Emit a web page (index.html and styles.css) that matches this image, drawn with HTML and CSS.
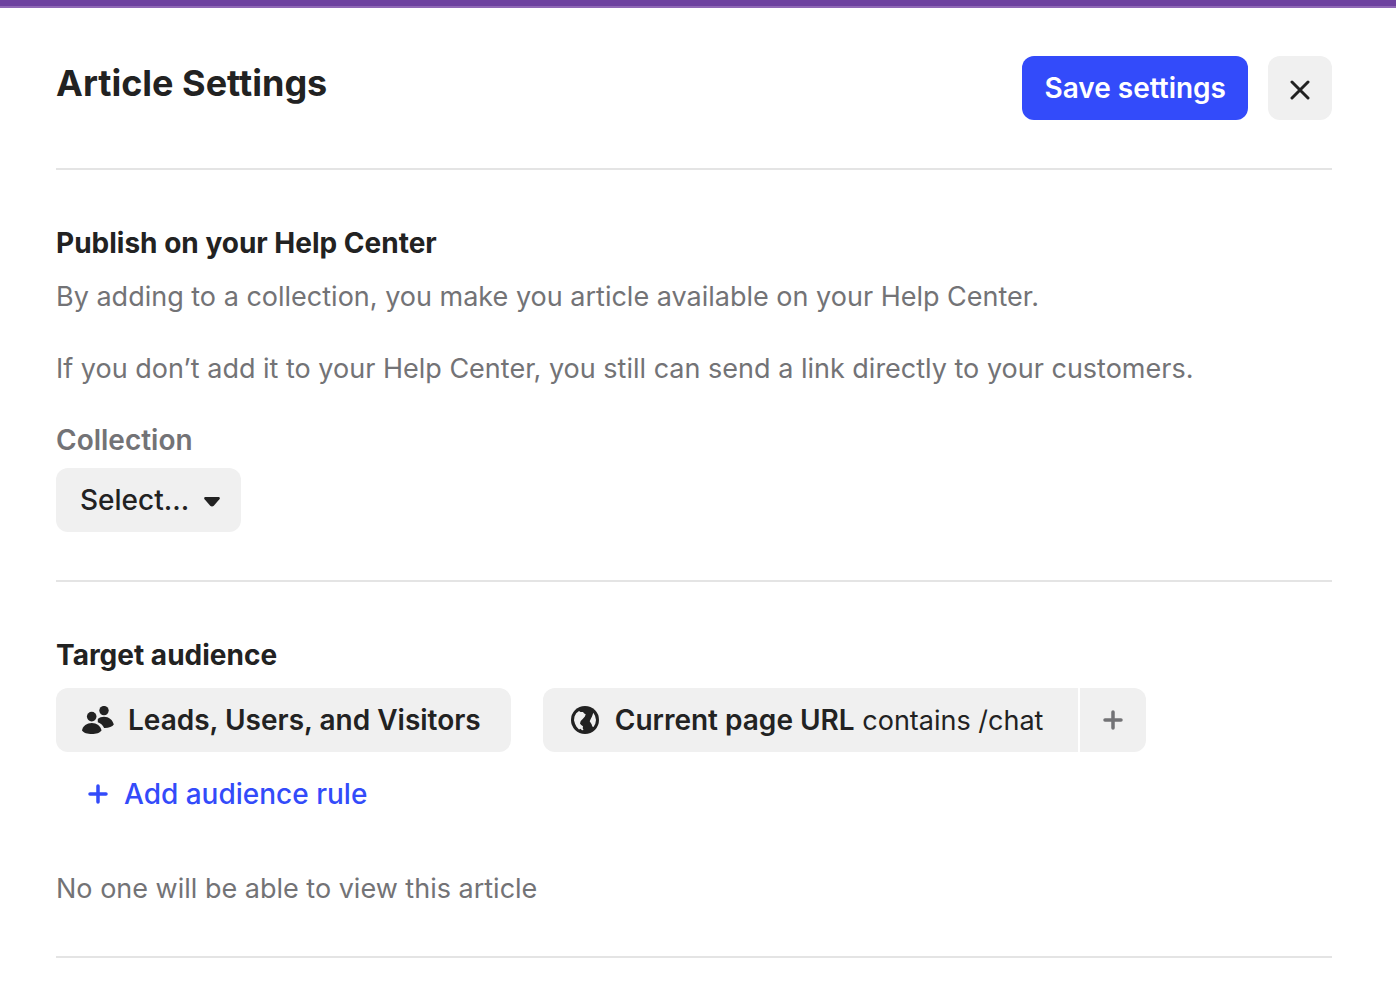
FILE: index.html
```html
<!DOCTYPE html>
<html lang="en">
<head>
  <meta charset="utf-8">
  <meta name="viewport" content="width=device-width, initial-scale=1">
  <title>Article Settings</title>
  <link rel="stylesheet" href="styles.css">
</head>
<body>
  <div class="topbar"></div>
  <main class="panel">
    <header class="panel-header">
      <h1 class="title">Article Settings</h1>
      <div class="actions">
        <button class="button button-primary" type="button">Save settings</button>
        <button class="button button-icon" type="button" aria-label="Close">
          <svg width="20" height="20" viewBox="0 0 20 20" fill="none" stroke="currentColor" stroke-width="3" stroke-linecap="round"><path d="M2 2l16 16M18 2L2 18"/></svg>
        </button>
      </div>
    </header>

    <section class="section">
      <h2 class="heading">Publish on your Help Center</h2>
      <p class="text">By adding to a collection, you make you article available on your Help Center.</p>
      <p class="text">If you don’t add it to your Help Center, you still can send a link directly to your customers.</p>
      <label class="label" for="collection">Collection</label>
      <div class="select">
        <select class="select-input" id="collection">
          <option>Select...</option>
        </select>
        <svg class="select-arrow" width="16" height="10" viewBox="0 0 16 10" fill="currentColor"><path d="M1.2 0h13.600q1.900.5.6 2.200L9.800 8.800q-1.800 1.600-3.600 0L.6 2.200Q-.7.5 1.200 0z"/></svg>
      </div>
    </section>

    <section class="section">
      <h2 class="heading">Target audience</h2>
      <div class="rules">
        <button class="button chip chip-audience" type="button">
          <svg width="34" height="28" viewBox="0 0 34 28" fill="currentColor"><circle cx="11.700" cy="10.600" r="4.800"/><circle cx="24" cy="4.600" r="4.700"/><path d="M2 24.500C2.500 20 7 17 11.800 17s9 3 9.700 7.500C20 27 16 28 11.800 28S3.500 27 2 24.500z"/><path d="M17.800 13c1.600-1.500 3.800-2.200 6.200-2.200 4.800 0 8.900 3.200 9.800 7.800-1.500 2.400-5.600 3.600-9.700 3.400-1-2.700-3.300-4.800-6.300-5.800z"/></svg>
          <strong class="strong">Leads, Users, and Visitors</strong>
        </button>
        <div class="rule-group">
          <button class="button chip chip-url" type="button">
            <svg width="28" height="28" viewBox="0 0 28 28"><circle cx="14" cy="14" r="14" fill="currentColor"/><path fill="#f0f0f0" d="M8 5l1.500 1 2.500 0 1.200 1.500 1.500.8-.8 2.200-2.200 2.500-2 2-.7 2.500 1.200 1.500 1.800 1.200-.3 2 .8 1.800-1.500.3-1.500-1.500-1.500.7-2.500-2.700-1.500-3-1-3.600.5-3.700 1.700-3.200zM22.300 6.700l1.700 3 1 4.300-.7 3.800-1.800 3.200-1.200-.4-.7-2.300-1.900-3 1-2.300 1.300-2.600z"/></svg>
            <span class="rule-text"><strong class="strong">Current page URL</strong> contains /chat</span>
          </button>
          <button class="button chip-add" type="button" aria-label="Add condition">
            <svg width="20" height="20" viewBox="0 0 20 20" fill="none" stroke="currentColor" stroke-width="3.500" stroke-linecap="round"><path d="M10 2v16M2 10h16"/></svg>
          </button>
        </div>
      </div>
      <button class="link-button" type="button">
        <svg width="20" height="20" viewBox="0 0 20 20" fill="none" stroke="currentColor" stroke-width="3.500" stroke-linecap="round"><path d="M10 2v16M2 10h16"/></svg>
        Add audience rule
      </button>
      <p class="text text-status">No one will be able to view this article</p>
    </section>
  </main>
</body>
</html>
```
FILE: styles.css
```css
* {
  box-sizing: border-box;
}

body {
  margin: 0;
  background: #fff;
  color: #222;
  font-family: Inter, "Liberation Sans", sans-serif;
  font-size: 28px;
  line-height: 36px;
}

svg {
  display: block;
  flex: none;
}

button,
select {
  margin: 0;
  border: 0;
  font: inherit;
  color: inherit;
  cursor: pointer;
}

.topbar {
  height: 8px;
  background: #6e429f;
  border-bottom: 2px solid #9069b6;
}

.panel {
  padding: 0 64px 44px 56px;
}

.panel-header {
  display: flex;
  justify-content: space-between;
  align-items: flex-start;
  padding: 48px 0;
  border-bottom: 2px solid #e4e4e4;
}

.title {
  margin: 4px 0 0;
  font-size: 36px;
  line-height: 46px;
  font-weight: 700;
}

.actions {
  display: flex;
  gap: 20px;
}

.button {
  display: flex;
  align-items: center;
  height: 64px;
  padding: 0 24px;
  border-radius: 12px;
  background: #f0f0f0;
  white-space: nowrap;
}

.button-primary {
  padding: 0 22px;
  background: #334bfa;
  color: #fff;
  font-weight: 600;
}

.button-icon {
  justify-content: center;
  width: 64px;
  padding: 4px 0 0;
}

.section {
  padding: 56px 0 48px;
  border-bottom: 2px solid #e4e4e4;
}

.heading {
  margin: 0;
  font-size: 28px;
  line-height: 34px;
  font-weight: 700;
}

.text {
  margin: 19px 0 36px;
  color: #737376;
  font-size: 27px;
}

.text + .text {
  margin: 0 0 35px;
}

.label {
  display: block;
  margin-bottom: 10px;
  color: #737376;
  font-weight: 600;
}

.select {
  position: relative;
  width: fit-content;
}

.select-input {
  display: block;
  height: 64px;
  padding: 0 51px 0 24px;
  border-radius: 12px;
  background: #f0f0f0;
  font-weight: 500;
  appearance: none;
}

.select-arrow {
  position: absolute;
  right: 21px;
  top: 29px;
  pointer-events: none;
}

.rules {
  display: flex;
  flex-wrap: wrap;
  gap: 16px 32px;
  margin-top: 16px;
}

.strong {
  font-size: 28px;
  font-weight: 600;
}

.rule-text {
  font-size: 27px;
}

.chip {
  gap: 14px;
}

.chip-audience {
  padding-right: 30px;
}

.rule-group {
  display: flex;
  gap: 2px;
}

.chip-url {
  gap: 16px;
  padding: 0 35px 0 28px;
  border-radius: 12px 0 0 12px;
}

.chip-add {
  justify-content: center;
  width: 66px;
  padding: 0;
  border-radius: 0 12px 12px 0;
  color: #737376;
}

.link-button {
  display: flex;
  align-items: center;
  gap: 16px;
  margin: 24px 0 0 32px;
  padding: 0;
  background: none;
  color: #334bfa;
  font-weight: 500;
}

.text-status {
  margin: 59px 0 0;
  padding-bottom: 1px;
}
```
